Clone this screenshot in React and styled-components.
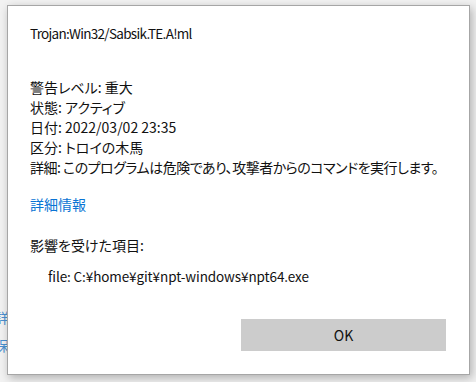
import React from 'react';
import styled, { createGlobalStyle } from 'styled-components';

const GlobalStyle = createGlobalStyle`
  html, body {
    margin: 0;
    padding: 0;
    background: #f2f2f2;
    width: 476px;
    height: 382px;
    overflow: hidden;
  }
  body {
    font-family: "Noto Sans CJK JP", "Noto Sans", sans-serif;
    font-feature-settings: "palt";
  }
`;

const Page = styled.div`
  position: relative;
  width: 476px;
  height: 382px;
`;

// links of the window behind the dialog, almost hidden
const BehindLinks = styled.div`
  display: flex;
  flex-direction: column;
  gap: 12px;
  padding-top: 309px;
  margin-left: -5px;
  color: #4a8fd0;
  font-size: 14px;
  line-height: 16px;
`;

const Dialog = styled.div`
  position: absolute;
  left: 7px;
  top: 5px;
  width: 463px;
  height: 370px;
  box-sizing: border-box;
  background: #fff;
  border: 1px solid #a6a6a6;
  box-shadow: 2px 3px 9px rgba(0, 0, 0, 0.28);
  display: flex;
  flex-direction: column;
  padding: 17px 23px 23px 22px;
  color: #111;
  font-size: 14px;
  line-height: 20px;
`;

const Title = styled.div`
  margin-bottom: 34px;
  font-size: 13.5px;
  letter-spacing: -0.7px;
`;

const Details = styled.div`
  display: flex;
  flex-direction: column;
`;

const Line = styled.div`
  white-space: nowrap;
  letter-spacing: ${({ $tight }) => ($tight ? '-0.5px' : '0')};
`;

const MoreLink = styled.a`
  display: block;
  margin-top: 17px;
  color: #0a74d4;
  text-decoration: none;
`;

const Section = styled.div`
  margin-top: 21px;
`;

const Item = styled.div`
  margin-top: 11px;
  padding-left: 18px;
  font-size: 13.5px;
  letter-spacing: -0.1px;
`;

const Footer = styled.div`
  margin-top: auto;
  display: flex;
  justify-content: flex-end;
`;

const OkButton = styled.button`
  width: 205px;
  height: 32px;
  border: none;
  background: #cccccc;
  color: #111;
  font-family: inherit;
  font-size: 14px;
  padding: 0;
`;

const details = [
  { text: '警告レベル: 重大' },
  { text: '状態: アクティブ' },
  { text: '日付:  2022/03/02 23:35' },
  { text: '区分: トロイの木馬' },
  { text: '詳細: このプログラムは危険であり、攻撃者からのコマンドを実行します。', tight: true },
];

export default function App() {
  return (
    <Page>
      <GlobalStyle />
      <BehindLinks>
        <span>詳</span>
        <span>保</span>
      </BehindLinks>
      <Dialog>
        <Title>Trojan:Win32/Sabsik.TE.A!ml</Title>
        <Details>
          {details.map((d) => (
            <Line key={d.text} $tight={d.tight}>{d.text}</Line>
          ))}
        </Details>
        <MoreLink href="#">詳細情報</MoreLink>
        <Section>影響を受けた項目:</Section>
        <Item>file: C:¥home¥git¥npt-windows¥npt64.exe</Item>
        <Footer>
          <OkButton>OK</OkButton>
        </Footer>
      </Dialog>
    </Page>
  );
}
